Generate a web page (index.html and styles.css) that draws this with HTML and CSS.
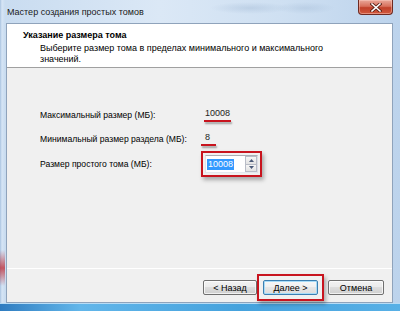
FILE: index.html
```html
<!DOCTYPE html>
<html lang="ru">
<head>
<meta charset="utf-8">
<link rel="stylesheet" href="styles.css">
</head>
<body>
<div class="window">
  <div class="titlebar">
    <span class="title">Мастер создания простых томов</span>
    <span class="close"><svg width="12" height="9" viewBox="0 0 12 9"><path d="M2 1 L10 8 M10 1 L2 8" stroke="#5a2015" stroke-width="3.2" stroke-linecap="square"/><path d="M2 1 L10 8 M10 1 L2 8" stroke="#fff" stroke-width="1.6" stroke-linecap="square"/></svg></span>
  </div>
  <div class="client">
    <div class="header">
      <div class="heading">Указание размера тома</div>
      <div class="subtitle">Выберите размер тома в пределах минимального и максимального<br>значений.</div>
    </div>
    <div class="content">
      <div class="grid">
        <span class="label">Максимальный размер (МБ):</span>
        <span class="value"><span class="mark">10008</span></span>
        <span class="label">Минимальный размер раздела (МБ):</span>
        <span class="value"><span class="mark mark-short">8</span></span>
        <span class="label">Размер простого тома (МБ):</span>
        <span class="value">
          <span class="hl-box">
            <span class="spinner">
              <span class="sel">10008</span>
              <span class="spin">
                <span class="spin-btn"><svg width="5" height="3" viewBox="0 0 5 3"><path d="M0 3 L2.5 0 L5 3 Z" fill="#4a5a78"/></svg></span>
                <span class="spin-btn"><svg width="5" height="3" viewBox="0 0 5 3"><path d="M0 0 L2.5 3 L5 0 Z" fill="#4a5a78"/></svg></span>
              </span>
            </span>
          </span>
        </span>
      </div>
    </div>
    <div class="footer">
      <button class="btn btn-back">&lt; Назад</button>
      <span class="hl-btn"><button class="btn btn-focus">Далее &gt;</button></span>
      <button class="btn btn-cancel">Отмена</button>
    </div>
  </div>
</div>
</body>
</html>
```

FILE: styles.css
```css
html, body {
  margin: 0;
  padding: 0;
}
body {
  width: 400px;
  height: 311px;
  overflow: hidden;
  font-family: "Liberation Sans", Arial, sans-serif;
  font-size: 9px;
  color: #000;
}
.window {
  width: 400px;
  height: 311px;
  box-sizing: border-box;
  display: flex;
  flex-direction: column;
  padding: 0 7px 8px 6px;
  background:
    radial-gradient(ellipse 40px 6px at 250px 8px, rgba(150,175,205,0.35), rgba(150,175,205,0) 100%),
    radial-gradient(ellipse 30px 6px at 305px 8px, rgba(150,175,205,0.3), rgba(150,175,205,0) 100%),
    linear-gradient(90deg, #a9c3e0 0, #d6e5f5 2px, #c9dcf0 5px, #dbe8f6 40%, #cfe0f2 70%, #bcd3ec 100%);
  position: relative;
}
.window::before {
  content: "";
  position: absolute;
  left: 0; right: 0; bottom: 0;
  height: 7px;
  background: linear-gradient(90deg, #2f7cc0 0, #62b6ea 20%, #45a2dd 60%, #58b0e6 100%);
  border-top: 1px solid #b8dcf5;
}
.window::after {
  content: "";
  position: absolute;
  left: 0; top: 250px;
  width: 5px; height: 36px;
  background: linear-gradient(180deg, rgba(190,40,50,0) 0, rgba(190,40,50,0.75) 50%, rgba(190,40,50,0) 100%);
}
.titlebar {
  height: 23px;
  display: flex;
  align-items: flex-start;
  justify-content: space-between;
  padding-left: 1px;
}
.title {
  margin-top: 7px;
  line-height: 11px;
  color: #1a1a1a;
}
.close {
  width: 35px;
  height: 15px;
  box-sizing: border-box;
  border: 1px solid #6e2a22;
  border-top: none;
  border-radius: 0 0 4px 4px;
  background: linear-gradient(180deg, #e9a89a 0, #d8705c 45%, #c0402a 55%, #d25a3e 100%);
  display: flex;
  align-items: center;
  justify-content: center;
  box-shadow: inset 0 0 0 1px rgba(255,210,200,0.45);
}
.close svg { display: block; }
.client {
  flex: 1;
  display: flex;
  flex-direction: column;
  background: #f0f0f0;
  border: 1px solid #8fa3bb;
  position: relative;
  z-index: 1;
}
.header {
  height: 44px;
  background: #fff;
  border-bottom: 1px solid #a0a0a0;
  padding: 5px 0 0 16px;
  box-sizing: border-box;
}
.heading {
  font-weight: bold;
  line-height: 12px;
}
.subtitle {
  margin-top: 2px;
  padding-left: 17px;
  line-height: 11px;
}
.content {
  flex: 1;
  padding: 35px 0 0 33px;
}
.grid {
  display: grid;
  grid-template-columns: 165px auto;
  grid-template-rows: 24px 24px 26px;
  align-items: center;
}
.label {
  line-height: 11px;
  font-size: 8.6px;
}
.value {
  display: flex;
  align-items: center;
}
.mark {
  display: inline-block;
  line-height: 11px;
  color: #222;
}
.mark::after {
  content: "";
  display: block;
  height: 2px;
  margin: 1px -1px 0 -1px;
  background: #c8141e;
  box-shadow: 1px 2px 2px rgba(0,0,0,0.35);
}
.mark-short::after {
  margin: 1px -6px 0 -4px;
}
.hl-box {
  margin-left: -4px;
  border: 2px solid #c8141e;
  padding: 2px;
  box-shadow: 2px 3px 4px rgba(0,0,0,0.3);
  display: flex;
}
.spinner {
  width: 53px;
  height: 18px;
  box-sizing: border-box;
  background: #fff;
  border: 1px solid #abadb3;
  border-left-color: #e2e3ea;
  border-right-color: #dbdfe6;
  border-bottom-color: #e3e9ef;
  display: flex;
  align-items: center;
  justify-content: space-between;
  padding: 0 0 0 1px;
}
.sel {
  background: #3399ff;
  color: #fff;
  line-height: 11px;
  padding: 0 1px;
}
.spin {
  display: flex;
  flex-direction: column;
  width: 12px;
  height: 16px;
}
.spin-btn {
  flex: 1;
  border: 1px solid #b8bcc6;
  background: linear-gradient(180deg, #f6f6f6, #e2e2e2);
  display: flex;
  align-items: center;
  justify-content: center;
}
.spin-btn + .spin-btn { border-top: none; }
.spin-btn svg { display: block; }
.footer {
  height: 34px;
  box-sizing: border-box;
  border-top: 1px solid #fff;
  display: flex;
  align-items: flex-start;
  justify-content: flex-end;
  padding: 11px 8px 0 0;
}
.btn {
  font-family: "Liberation Sans", Arial, sans-serif;
  font-size: 9px;
  color: #000;
  height: 15px;
  box-sizing: border-box;
  padding: 0;
  line-height: 12px;
  border: 1px solid #707070;
  border-radius: 2px;
  background: linear-gradient(180deg, #f2f2f2 0, #ebebeb 50%, #dddddd 50%, #cfcfcf 100%);
  box-shadow: inset 0 0 0 1px rgba(255,255,255,0.7);
  text-align: center;
}
.btn-back { width: 54px; margin-right: 6px; }
.btn-cancel { width: 56px; margin-left: 10px; }
.btn-focus {
  width: 55px;
  border-color: #3c7fb1;
  background: linear-gradient(180deg, #f7f7f7 0, #f0f0f0 50%, #e6e6e6 50%, #dcdcdc 100%);
  box-shadow: inset 0 0 0 1px #a8dcf8;
}
.hl-btn {
  display: flex;
  margin: -6px;
  padding: 4px;
  border: 2px solid #c8141e;
  box-shadow: 2px 3px 4px rgba(0,0,0,0.3);
}
```
